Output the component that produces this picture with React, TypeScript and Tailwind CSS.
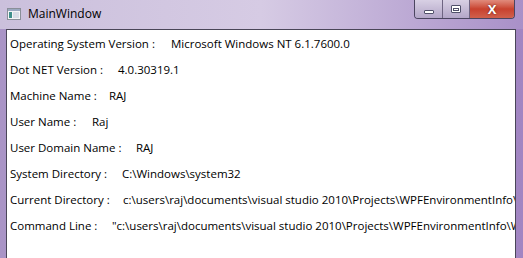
const rows = [
	{ label: "Operating System Version :", value: "Microsoft Windows NT 6.1.7600.0", w: "w-[161px]" },
	{ label: "Dot NET Version :", value: "4.0.30319.1", w: "w-[108px]" },
	{ label: "Machine Name :", value: "RAJ", w: "w-[99px]" },
	{ label: "User Name :", value: "Raj", w: "w-[82px]" },
	{ label: "User Domain Name :", value: "RAJ", w: "w-[126px]" },
	{ label: "System Directory :", value: "C:\\Windows\\system32", w: "w-[112px]" },
	{
		label: "Current Directory :",
		value: "c:\\users\\raj\\documents\\visual studio 2010\\Projects\\WPFEnvironmentInfo\\WPFEnvironmentInfo\\bin\\Debug",
		w: "w-[113px]",
	},
	{
		label: "Command Line :",
		value: "\"c:\\users\\raj\\documents\\visual studio 2010\\Projects\\WPFEnvironmentInfo\\WPFEnvironmentInfo\\bin\\Debug\\WPFEnvironmentInfo.exe\"",
		w: "w-[102px]",
	},
];

const WindowIcon = () => (
	<svg width="14" height="12" viewBox="0 0 14 12">
		<rect x="0.5" y="0.5" width="13" height="11" fill="#f4f4f6" stroke="#8a8f99" />
		<rect x="1" y="1" width="12" height="2" fill="#9aa8c0" />
		<rect x="2" y="4" width="3" height="6" fill="#3f8f8a" />
		<rect x="6" y="4" width="6" height="6" fill="#d8dde6" />
	</svg>
);

const App = () => {
	return (
		<div
			className="w-[523px] h-[258px] overflow-hidden flex flex-col bg-gradient-to-r from-[#a994c6] via-[#b9a7d2] to-[#a185c2]"
			style={{ fontFamily: '"Open Sans", "Noto Sans", sans-serif' }}>
			{/* title bar */}
			<div className="h-[29px] flex items-start shrink-0 bg-gradient-to-r from-[#cbc0dc] via-[#d6cbe4] to-[#a990c8]">
				<div className="flex items-center gap-[7px] pl-[7px] pt-[6px]">
					<WindowIcon />
					<span className="text-[12px] text-black leading-[16px]">MainWindow</span>
				</div>
				<div className="ml-auto mr-[8px] flex h-[19px] rounded-b-[4px] border border-t-0 border-[#4b4560] overflow-hidden">
					<div className="w-[28px] flex items-center justify-center bg-gradient-to-b from-[#d8d0e4] to-[#b3a6c8] border-r border-[#6e6482]">
						<div className="w-[10px] h-[4px] mt-[5px] bg-white border border-[#50506a] rounded-[1px]" />
					</div>
					<div className="w-[27px] flex items-center justify-center bg-gradient-to-b from-[#d8d0e4] to-[#b3a6c8] border-r border-[#6e6482]">
						<div className="w-[10px] h-[8px] bg-white border border-[#50506a] rounded-[1px] flex items-center justify-center">
							<div className="w-[6px] h-[3px] border border-[#50506a]" />
						</div>
					</div>
					<div className="w-[44px] flex items-center justify-center bg-gradient-to-b from-[#e08a7c] via-[#c8412e] to-[#d0604c]">
						<span className="text-white font-bold text-[13px] leading-none" style={{ textShadow: "0 0 2px #5a1a10" }}>
							X
						</span>
					</div>
				</div>
			</div>
			{/* client area */}
			<div className="flex-1 ml-[6px] mr-[7px] border border-b-0 border-[#4a4658] bg-white pt-[1px] pl-[3px] overflow-hidden">
				{rows.map(({ label, value, w }) => (
					<div key={label} className="h-[26px] flex items-center whitespace-nowrap text-[11.5px] text-black">
						<span className={`${w} shrink-0`}>{label}</span>
						<span>{value}</span>
					</div>
				))}
			</div>
		</div>
	);
};

export default App;
